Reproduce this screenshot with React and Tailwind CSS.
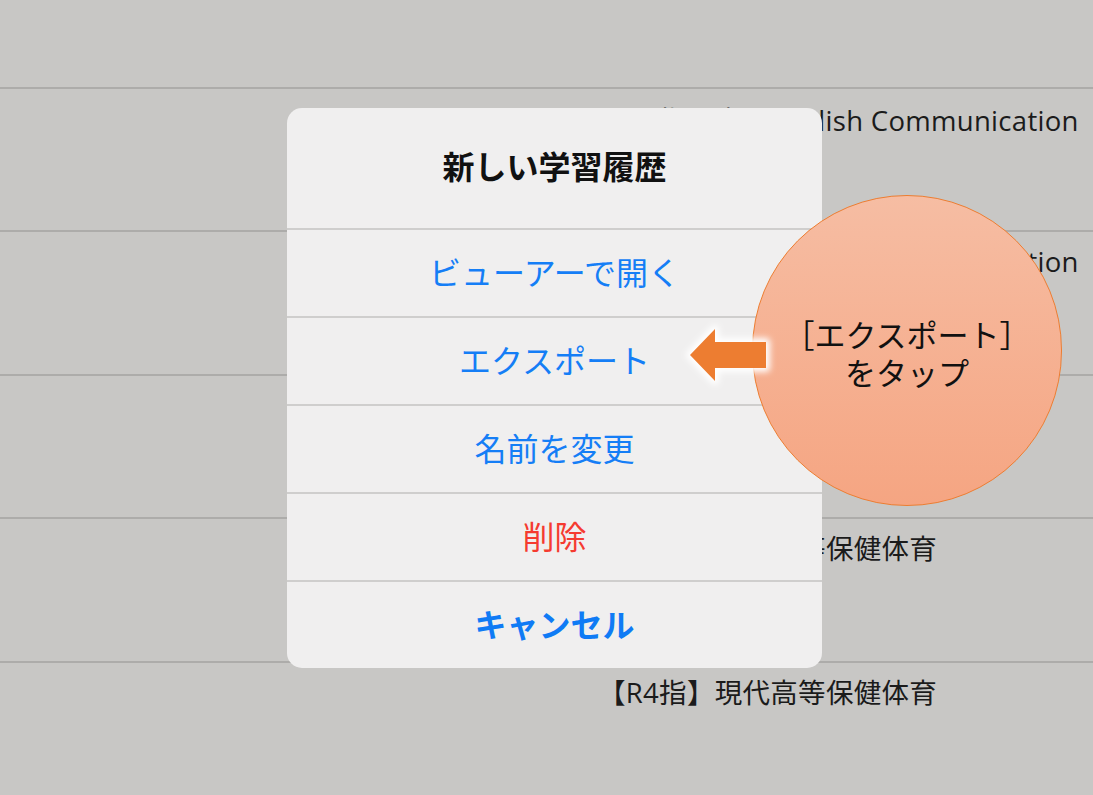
import React from "react";

const rows = [
  { h: "h-[143px]", pt: "pt-[16px]", text: "【R4指】高　English Communication" },
  { h: "h-[144px]", pt: "pt-[14px]", text: "【R4指】新　English Communication" },
  { h: "h-[143px]", pt: "pt-[14px]", text: "【R4指】現代高等保健体育" },
  { h: "h-[144px]", pt: "pt-[14px]", text: "【R4指】現代高等保健体育" },
  { h: "h-[143px]", pt: "pt-[14px]", text: "【R4指】現代高等保健体育" },
];

const items = [
  { label: "ビューアーで開く", cls: "text-[#157ef6]" },
  { label: "エクスポート", cls: "text-[#157ef6]" },
  { label: "名前を変更", cls: "text-[#157ef6]" },
  { label: "削除", cls: "text-[#f53b30]" },
  { label: "キャンセル", cls: "text-[#0f7bf5] font-bold" },
];

export default function App() {
  return (
    <div className="relative w-[1093px] h-[795px] overflow-hidden bg-[#c8c7c5] font-['Noto_Sans_CJK_JP',sans-serif]">
      {/* background list */}
      <div className="relative z-0 flex flex-col font-['Open_Sans','Noto_Sans_CJK_JP',sans-serif]">
        <div className="h-[89px] border-b-2 border-[#adacaa]" />
        {rows.map((r, i) => (
          <div
            key={i}
            className={`${r.h} ${r.pt} border-b-2 border-[#adacaa] pl-[598px]`}
          >
            <div className="text-[27.5px] leading-[32px] tracking-[0.3px] text-[#1b1b1b] whitespace-nowrap">
              {r.text}
            </div>
          </div>
        ))}
      </div>

      {/* action sheet */}
      <div className="absolute z-10 left-[287px] top-[108px] w-[535px] h-[560px] rounded-[15px] bg-[#f0efef] overflow-hidden flex flex-col">
        <div className="h-[120px] pb-[6px] flex items-center justify-center text-[32px] font-bold text-[#111111]">
          新しい学習履歴
        </div>
        {items.map((it, i) => (
          <div
            key={i}
            className={`h-[88px] pb-[5px] border-t-2 border-[#cfcecd] flex items-center justify-center text-[32px] ${it.cls}`}
          >
            {it.label}
          </div>
        ))}
      </div>

      {/* callout circle */}
      <div className="absolute z-20 left-[752px] top-[195px] w-[310px] h-[311px] rounded-full border border-[#ed7d31] bg-linear-to-b from-[#f6bda3] to-[#f5a582] flex flex-col items-center justify-center text-[31px] leading-[38px] text-[#111111] pt-[5px]">
        <div>［エクスポート］</div>
        <div>をタップ</div>
      </div>

      {/* arrow */}
      <svg
        className="absolute z-30 left-[680px] top-[318px]"
        width="100"
        height="75"
        viewBox="0 0 100 75"
      >
        <defs>
          <filter id="glow" x="-30%" y="-30%" width="160%" height="160%">
            <feGaussianBlur stdDeviation="3" />
          </filter>
        </defs>
        <polygon
          points="10,37 35,11 35,24 86,24 86,50 35,50 35,63"
          fill="#ffffff"
          stroke="#ffffff"
          strokeWidth="8"
          strokeLinejoin="round"
          filter="url(#glow)"
        />
        <polygon
          points="10,37 35,11 35,24 86,24 86,50 35,50 35,63"
          fill="#ed7d31"
        />
      </svg>
    </div>
  );
}
